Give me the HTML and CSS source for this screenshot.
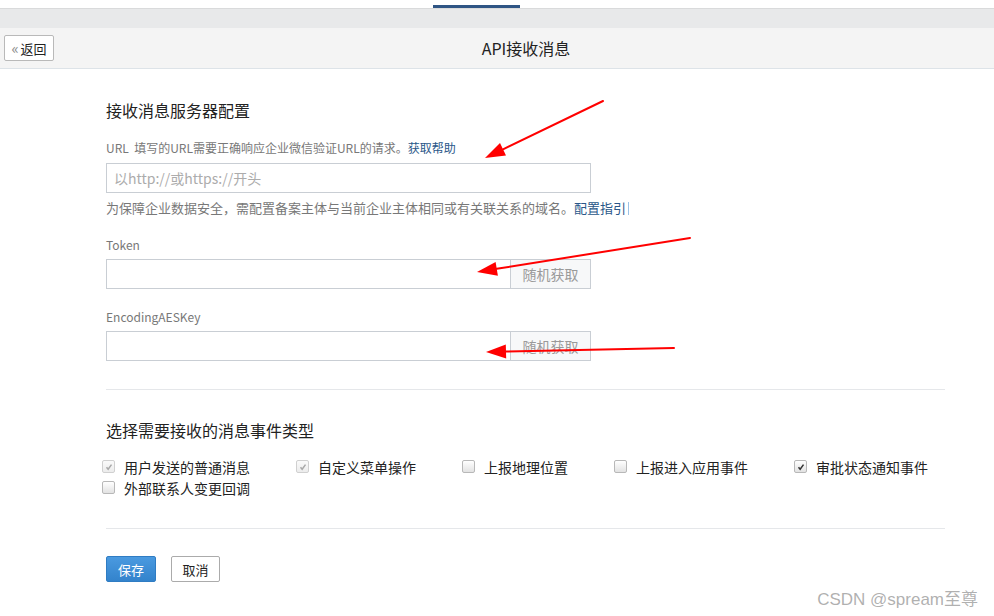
FILE: index.html
```html
<!DOCTYPE html>
<html lang="zh-CN">
<head>
<meta charset="utf-8">
<title>API接收消息</title>
<link rel="stylesheet" href="styles.css">
</head>
<body>
<div class="page">
  <div class="topbar"><span class="tab-indicator"></span></div>
  <div class="band"></div>
  <div class="header">
    <button class="back-btn"><span class="chev">«</span>返回</button>
    <div class="title">API接收消息</div>
  </div>

  <div class="content">
    <h2 class="section-title">接收消息服务器配置</h2>

    <div class="label first-label">URL&nbsp;&nbsp;填写的URL需要正确响应企业微信验证URL的请求。<a class="link">获取帮助</a></div>
    <div class="field"><div class="input"><span class="placeholder">以http://或https://开头</span></div></div>
    <div class="note">为保障企业数据安全，需配置备案主体与当前企业主体相同或有关联关系的域名。<a class="link">配置指引</a><span class="caret"></span></div>

    <div class="label label-gap">Token</div>
    <div class="field"><div class="input"></div><button class="rand-btn">随机获取</button></div>

    <div class="label label-gap">EncodingAESKey</div>
    <div class="field"><div class="input"></div><button class="rand-btn">随机获取</button></div>

    <div class="divider first"></div>

    <h2 class="section-title second">选择需要接收的消息事件类型</h2>

    <div class="checks">
      <label class="check"><span class="box disabled"><svg viewBox="0 0 12 12"><path d="M3 6.2 L5 8.6 L9 3.2" /></svg></span>用户发送的普通消息</label>
      <label class="check"><span class="box disabled"><svg viewBox="0 0 12 12"><path d="M3 6.2 L5 8.6 L9 3.2" /></svg></span>自定义菜单操作</label>
      <label class="check"><span class="box"></span>上报地理位置</label>
      <label class="check"><span class="box"></span>上报进入应用事件</label>
      <label class="check"><span class="box on"><svg viewBox="0 0 12 12"><path d="M3 6.2 L5 8.6 L9 3.2" /></svg></span>审批状态通知事件</label>
      <label class="check"><span class="box"></span>外部联系人变更回调</label>
    </div>

    <div class="divider second"></div>

    <div class="actions">
      <button class="btn-save">保存</button>
      <button class="btn-cancel">取消</button>
    </div>
  </div>

  <svg class="arrows" width="994" height="616" viewBox="0 0 994 616">
    <g stroke="#ff0000" stroke-width="2" fill="none" stroke-linecap="round">
      <line x1="603" y1="101" x2="503" y2="149.3"/>
      <line x1="690" y1="238" x2="496.7" y2="268.8"/>
      <line x1="674" y1="348" x2="506" y2="351.6"/>
    </g>
    <g fill="#ff0000">
      <polygon points="485,158 506,155.6 500,143"/>
      <polygon points="477,272 497.9,275.8 495.6,261.9"/>
      <polygon points="486,352 506.2,358.6 505.8,344.6"/>
    </g>
  </svg>

  <div class="watermark">CSDN @spream至尊</div>
</div>
</body>
</html>
```

FILE: styles.css
```css
* { box-sizing: border-box; }

html, body {
  margin: 0;
  padding: 0;
  background: #ffffff;
}

body {
  font-family: "Noto Sans CJK SC", "Noto Sans", sans-serif;
  color: #333333;
}

.page {
  position: relative;
  width: 994px;
  height: 616px;
  overflow: hidden;
}

.topbar {
  height: 9px;
  background: #ffffff;
  border-bottom: 1px solid #d9dadb;
  display: flex;
  align-items: flex-end;
}

.tab-indicator {
  display: block;
  width: 87px;
  height: 3px;
  margin-left: 433px;
  background: #2f5584;
}

.band {
  height: 19px;
  background: #e8e9ea;
}

.header {
  height: 41px;
  background: #f4f4f4;
  border-bottom: 1px solid #dde3e8;
  display: flex;
  align-items: center;
}

.back-btn {
  margin-left: 4px;
  width: 50px;
  height: 26px;
  padding: 0;
  border: 1px solid #b9b9b9;
  border-radius: 2px;
  background: #ffffff;
  font-family: inherit;
  font-size: 13px;
  color: #222;
  display: flex;
  align-items: center;
  justify-content: center;
  line-height: 1;
}

.back-btn .chev {
  color: #8a8a8a;
  font-size: 15px;
  margin-right: 2px;
  position: relative;
  top: -1px;
}

.title {
  flex: 1;
  text-align: center;
  font-size: 16px;
  color: #222;
  padding-left: 4px;
}

.content {
  padding: 30px 0 0 106px;
  width: 945px;
}

.section-title {
  margin: 0;
  font-size: 16px;
  line-height: 22px;
  font-weight: normal;
  color: #222;
}

.section-title.second {
  margin-top: 29px;
}

.label {
  margin-top: 16px;
  font-size: 12px;
  line-height: 18px;
  color: #787878;
}

.label.first-label {
  margin-top: 18px;
}

.label.label-gap {
  margin-top: 19px;
}

.link {
  color: #2a5789;
  text-decoration: none;
}

.field {
  margin-top: 6px;
  width: 485px;
  height: 30px;
  display: flex;
}

.label-gap + .field {
  margin-top: 5px;
}

.input {
  flex: 1;
  height: 30px;
  border: 1px solid #c9ced4;
  background: #fff;
  display: flex;
  align-items: center;
  padding-left: 7px;
}

.placeholder {
  font-size: 14px;
  color: #acacac;
}

.rand-btn {
  width: 81px;
  height: 30px;
  margin-left: -1px;
  padding: 0;
  border: 1px solid #c9ced4;
  background: #f7f8f9;
  font-family: inherit;
  font-size: 14px;
  color: #9a9a9a;
}

.note {
  margin-top: 6px;
  font-size: 13px;
  line-height: 18px;
  color: #787878;
  display: flex;
  align-items: center;
}

.caret {
  display: inline-block;
  width: 1px;
  height: 13px;
  background: #9cc3e6;
  margin-left: 2px;
}

.divider {
  height: 1px;
  background: #e5e7ea;
  width: 839px;
}

.divider.first {
  margin-top: 28px;
}

.divider.second {
  margin-top: 30px;
}

.checks {
  margin-top: 15px;
  margin-left: -4px;
  width: 850px;
  display: flex;
  flex-wrap: wrap;
  column-gap: 46px;
}

.check {
  display: flex;
  align-items: center;
  height: 21px;
  font-size: 14px;
  color: #222;
}

.box {
  width: 13px;
  height: 13px;
  margin-right: 9px;
  border: 1px solid #b8b8b8;
  border-radius: 2px;
  background: linear-gradient(#ffffff, #e2e2e2);
  display: flex;
  align-items: center;
  justify-content: center;
}

.box svg {
  width: 10px;
  height: 10px;
  fill: none;
  stroke-width: 1.8;
}

.box.disabled {
  border-color: #d0d0d0;
  background: linear-gradient(#fafafa, #ececec);
}

.box.disabled svg { stroke: #a8a8a8; }

.box.on svg { stroke: #333; }

.actions {
  margin-top: 27px;
  display: flex;
  gap: 15px;
}

.btn-save {
  width: 50px;
  height: 26px;
  padding: 0;
  border: 1px solid #2f7cc3;
  border-radius: 2px;
  background: linear-gradient(#4a9ae0, #3383cc);
  color: #fff;
  font-family: inherit;
  font-size: 13px;
}

.btn-cancel {
  width: 49px;
  height: 26px;
  padding: 0;
  border: 1px solid #ababab;
  border-radius: 2px;
  background: #fff;
  color: #222;
  font-family: inherit;
  font-size: 13px;
}

.arrows {
  position: absolute;
  left: 0;
  top: 0;
  pointer-events: none;
}

.watermark {
  position: absolute;
  right: 16px;
  bottom: 6px;
  font-family: "Liberation Sans", "Noto Sans CJK SC", sans-serif;
  font-size: 17px;
  color: rgba(150, 150, 150, 0.75);
}
```
